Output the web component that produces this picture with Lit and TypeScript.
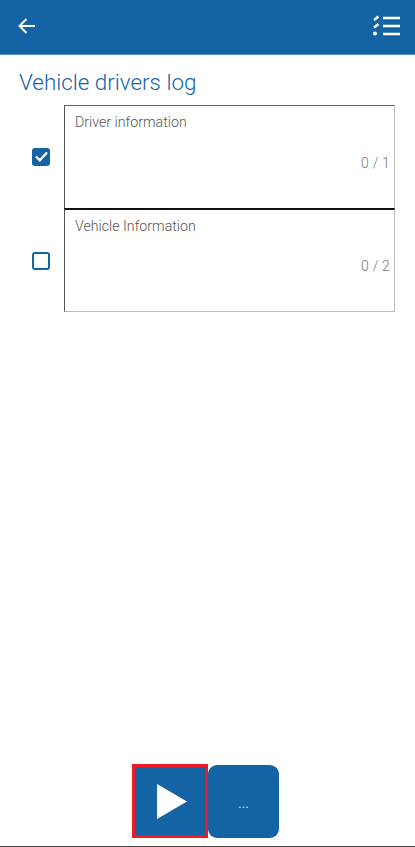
import { LitElement, html, css } from 'lit';
import { customElement } from 'lit/decorators.js';

const sections = [
  { name: 'Driver information', count: '0 / 1', checked: true },
  { name: 'Vehicle Information', count: '0 / 2', checked: false },
];

@customElement('app-root')
export class AppRoot extends LitElement {
  static styles = css`
    :host {
      display: flex;
      flex-direction: column;
      height: 847px;
      background: #fff;
      font-family: Roboto, 'Liberation Sans', sans-serif;
      overflow: hidden;
    }
    .bar {
      flex: none;
      height: 55px;
      box-sizing: border-box;
      border-bottom: 1px solid #5a93c2;
      background: #1464a5;
      display: flex;
      align-items: center;
      justify-content: space-between;
      padding: 0 15px 2px 18px;
    }
    .bar svg {
      display: block;
    }
    .bar .tasks {
      margin-bottom: 2px;
    }
    .title {
      margin: 14px 0 0 19px;
      font-size: 22.4px;
      line-height: 26px;
      font-weight: 300;
      color: #1464a5;
    }
    .list {
      margin: 10px 20px 0 32px;
      display: flex;
      flex-direction: column;
    }
    .row {
      display: flex;
      align-items: center;
      height: 103px;
    }
    .row + .row {
      height: 104px;
    }
    .check {
      flex: none;
      width: 18px;
      height: 18px;
      box-sizing: border-box;
      border: 2px solid #1464a5;
      border-radius: 3px;
      margin-right: 14px;
      display: flex;
      align-items: center;
      justify-content: center;
    }
    .check.on {
      background: #1464a5;
    }
    .row + .row .check {
      margin-top: 2px;
    }
    .box {
      flex: 1;
      align-self: stretch;
      box-sizing: border-box;
      border-left: 1px solid #555;
      border-right: 1px solid #bbb;
      border-top: 1px solid #666;
      padding: 7px 4px 0 10px;
      display: flex;
      flex-direction: column;
    }
    .row + .row .box {
      border-top: 2px solid #111;
      border-bottom: 1px solid #bbb;
    }
    .name {
      font-size: 14.2px;
      line-height: 18px;
      font-weight: 300;
      color: #555;
    }
    .count {
      margin-top: 23px;
      text-align: right;
      font-size: 14px;
      line-height: 18px;
      font-weight: 300;
      letter-spacing: 0.2px;
      color: #777;
    }
    .row + .row .count {
      margin-top: 22px;
    }
    .spacer {
      flex: 1;
    }
    .actions {
      flex: none;
      display: flex;
      align-items: flex-end;
      justify-content: center;
      padding-right: 4px;
      margin-bottom: 8px;
    }
    .play {
      width: 76px;
      height: 74px;
      box-sizing: border-box;
      border: 3px solid #ed1c24;
      padding-left: 4px;
      background: #1464a5;
      display: flex;
      align-items: center;
      justify-content: center;
    }
    .more {
      width: 71px;
      height: 73px;
      box-sizing: border-box;
      padding-top: 3px;
      border-radius: 9px;
      background: #1464a5;
      color: #c5d8e8;
      font-size: 14px;
      display: flex;
      align-items: center;
      justify-content: center;
    }
    .rule {
      flex: none;
      height: 1px;
      background: #444;
    }
  `;

  render() {
    return html`
      <div class="bar">
        <svg width="17" height="16" viewBox="0 0 17 16" fill="none" stroke="#fff" stroke-width="2">
          <path d="M17 8H1.500M8.500 1 1.500 8l7 7" />
        </svg>
        <svg class="tasks" width="28" height="21" viewBox="0 0 28 21" fill="none" stroke="#fff">
          <path stroke-width="2.4" d="M2 5 6.500 1.500M2 12.500 6.500 9" />
          <circle cx="3" cy="18.500" r="2" fill="#fff" stroke="none" />
          <path stroke-width="2.400" d="M11 3H28M11 11H28M11 19H28" />
        </svg>
      </div>
      <div class="title">Vehicle drivers log</div>
      <div class="list">
        ${sections.map(
          (s) => html`
            <div class="row">
              <div class="check ${s.checked ? 'on' : ''}">
                ${s.checked
                  ? html`<svg width="13" height="11" viewBox="0 0 13 11" fill="none" stroke="#fff" stroke-width="2.400">
                      <path d="M1 5.500l3.800 3.800L12 1.500" />
                    </svg>`
                  : ''}
              </div>
              <div class="box">
                <div class="name">${s.name}</div>
                <div class="count">${s.count}</div>
              </div>
            </div>
          `
        )}
      </div>
      <div class="spacer"></div>
      <div class="actions">
        <div class="play">
          <svg width="30" height="35" viewBox="0 0 30 35"><path d="M0 0 30 17.500 0 35Z" fill="#fff" /></svg>
        </div>
        <div class="more">...</div>
      </div>
      <div class="rule"></div>
    `;
  }
}
